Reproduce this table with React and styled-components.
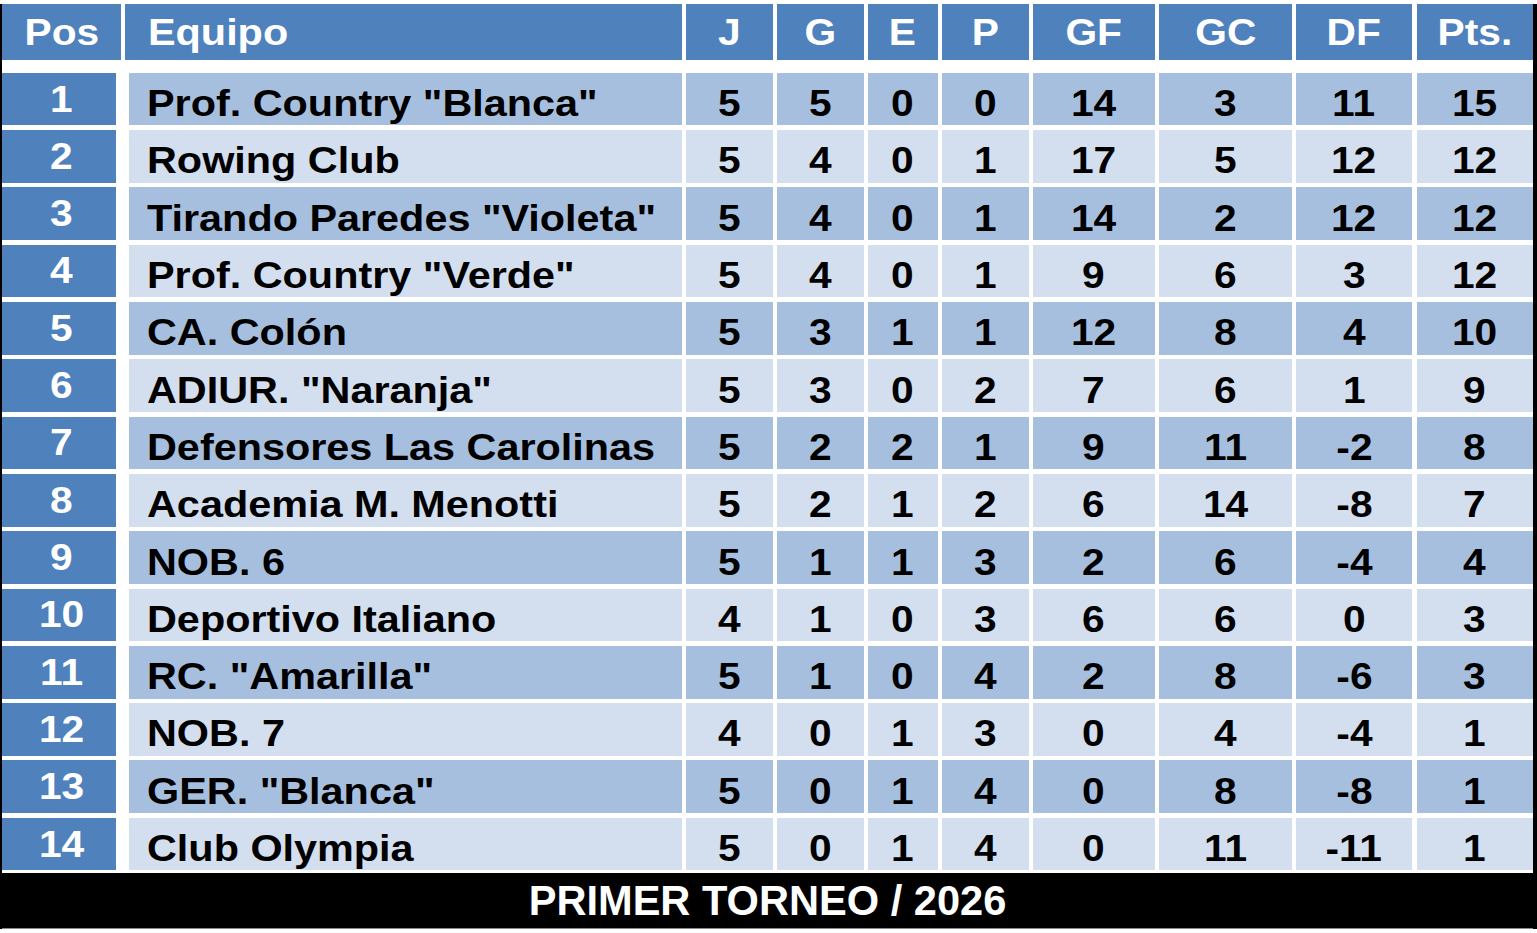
import styled, { createGlobalStyle } from "styled-components";

const GlobalStyle = createGlobalStyle`
  html, body {
    margin: 0;
    padding: 0;
    background: #ffffff;
  }
  body {
    font-family: "Liberation Sans", Arial, sans-serif;
  }
`;

const COLUMNS =
  "118.5px 556.5px 86.5px 86.5px 69.5px 86.5px 121.5px 132.5px 116px 116.5px";

const Board = styled.div`
  width: 1537px;
  box-sizing: border-box;
  padding-top: 4px;
`;

const Frame = styled.div`
  border-left: 2px solid #000;
  border-right: 4px solid #000;
  background: #fff;
`;

const HeadRow = styled.div`
  display: grid;
  grid-template-columns: ${COLUMNS};
  column-gap: 4.5px;
  height: 56px;
  margin-bottom: 12.7px;
`;

const HeadCell = styled.div`
  background: #4f81bd;
  color: #fff;
  font-weight: 700;
  font-size: 37px;
  display: flex;
  align-items: center;
  justify-content: ${(p) => (p.$left ? "flex-start" : "center")};
  padding-left: ${(p) => (p.$left ? "23px" : p.$nudge ? "2px" : "0")};
`;

const Rows = styled.div`
  display: grid;
  row-gap: 4.63px;
`;

const Row = styled.div`
  display: grid;
  grid-template-columns: ${COLUMNS};
  column-gap: 4.5px;
  height: 52.7px;
`;

const PosCell = styled.div`
  background: #4f81bd;
  color: #fff;
  font-weight: 700;
  font-size: 37px;
  margin-right: 5px;
  padding-left: 6px;
  display: flex;
  align-items: center;
  justify-content: center;
`;

const Cell = styled.div`
  background: ${(p) => (p.$dark ? "#a7bfde" : "#d3dfef")};
  color: #000;
  font-weight: 700;
  font-size: 37px;
  display: flex;
  align-items: center;
  padding-top: 9px;
  box-sizing: border-box;
  justify-content: ${(p) => (p.$left ? "flex-start" : "center")};
  padding-left: ${(p) => (p.$left ? "18px" : "0")};
  margin-left: ${(p) => (p.$left ? "4px" : "0")};
  white-space: nowrap;
  overflow: hidden;
`;

const Wide = styled.span`
  display: inline-block;
  transform: scaleX(${(p) => (p.$left ? 1.118 : 1.1)});
  transform-origin: ${(p) => (p.$left ? "left center" : "center")};
  line-height: 1;
`;

const Footer = styled.div`
  margin-top: 2.6px;
  height: 55px;
  background: #000;
  color: #fff;
  font-weight: 700;
  font-size: 41.6px;
  display: flex;
  align-items: center;
  justify-content: center;
  border-bottom: 1px solid #8a8a8a;
`;

const headers = ["J", "G", "E", "P", "GF", "GC", "DF", "Pts."];

const teams = [
  ["Prof. Country \"Blanca\"", 5, 5, 0, 0, 14, 3, 11, 15],
  ["Rowing Club", 5, 4, 0, 1, 17, 5, 12, 12],
  ["Tirando Paredes \"Violeta\"", 5, 4, 0, 1, 14, 2, 12, 12],
  ["Prof. Country \"Verde\"", 5, 4, 0, 1, 9, 6, 3, 12],
  ["CA. Colón", 5, 3, 1, 1, 12, 8, 4, 10],
  ["ADIUR. \"Naranja\"", 5, 3, 0, 2, 7, 6, 1, 9],
  ["Defensores Las Carolinas", 5, 2, 2, 1, 9, 11, -2, 8],
  ["Academia M. Menotti", 5, 2, 1, 2, 6, 14, -8, 7],
  ["NOB. 6", 5, 1, 1, 3, 2, 6, -4, 4],
  ["Deportivo Italiano", 4, 1, 0, 3, 6, 6, 0, 3],
  ["RC. \"Amarilla\"", 5, 1, 0, 4, 2, 8, -6, 3],
  ["NOB. 7", 4, 0, 1, 3, 0, 4, -4, 1],
  ["GER. \"Blanca\"", 5, 0, 1, 4, 0, 8, -8, 1],
  ["Club Olympia", 5, 0, 1, 4, 0, 11, -11, 1],
];

export default function App() {
  return (
    <>
      <GlobalStyle />
      <Board>
        <Frame>
          <HeadRow>
            <HeadCell $nudge>
              <Wide>Pos</Wide>
            </HeadCell>
            <HeadCell $left>
              <Wide $left>Equipo</Wide>
            </HeadCell>
            {headers.map((h) => (
              <HeadCell key={h}>
                <Wide>{h}</Wide>
              </HeadCell>
            ))}
          </HeadRow>
          <Rows>
            {teams.map(([name, ...stats], i) => {
              const dark = i % 2 === 0;
              return (
                <Row key={name}>
                  <PosCell>
                    <Wide>{i + 1}</Wide>
                  </PosCell>
                  <Cell $dark={dark} $left>
                    <Wide $left>{name}</Wide>
                  </Cell>
                  {stats.map((v, j) => (
                    <Cell key={j} $dark={dark}>
                      <Wide>{v}</Wide>
                    </Cell>
                  ))}
                </Row>
              );
            })}
          </Rows>
          <Footer>PRIMER TORNEO / 2026</Footer>
        </Frame>
      </Board>
    </>
  );
}
